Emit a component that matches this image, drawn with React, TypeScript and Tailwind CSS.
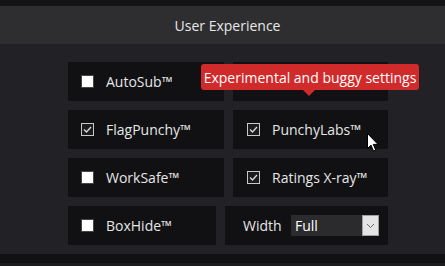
import React from "react";

function Check({ checked }: { checked: boolean }) {
  if (checked) {
    return (
      <span className="w-[13px] h-[13px] border border-[#c8c8c8] bg-[#1c1c1e] flex items-center justify-center shrink-0">
        <svg width="11" height="11" viewBox="0 0 11 11">
          <path d="M2 5.5 L4.5 8 L9 3" stroke="#d8d8d8" strokeWidth="1.4" fill="none" />
        </svg>
      </span>
    );
  }
  return <span className="w-[13px] h-[13px] border border-[#444] bg-white shrink-0" />;
}

function Opt({ label, checked, w, pl }: { label: string; checked: boolean; w: string; pl: string }) {
  return (
    <div className={`${w} h-[39px] bg-[#111113] flex items-center ${pl} gap-[12px] text-[14px] text-[#e6e6e6]`}>
      <Check checked={checked} />
      <span>{label}</span>
    </div>
  );
}

export default function App() {
  return (
    <div className="w-[445px] h-[266px] bg-[#222226] flex flex-col relative overflow-hidden" style={{ fontFamily: '"Open Sans", sans-serif' }}>
      <div className="h-[6px] bg-[#131315]" />
      <div className="h-[38px] bg-[#2e2e31] flex items-center justify-center text-[14px] text-[#e8e8e8] pl-[10px]">
        User Experience
      </div>
      <div className="flex-1 flex flex-col gap-[9px] pt-[18px] pl-[68px]">
        <div className="flex gap-[9px]">
          <Opt label="AutoSub™" checked={false} w="w-[156px]" pl="pl-[13px]" />
          <Opt label="" checked={false} w="w-[155px]" pl="pl-[14px]" />
        </div>
        <div className="flex gap-[9px]">
          <Opt label="FlagPunchy™" checked={true} w="w-[156px]" pl="pl-[13px]" />
          <Opt label="PunchyLabs™" checked={true} w="w-[155px]" pl="pl-[14px]" />
        </div>
        <div className="flex gap-[9px]">
          <Opt label="WorkSafe™" checked={false} w="w-[156px]" pl="pl-[13px]" />
          <Opt label="Ratings X-ray™" checked={true} w="w-[155px]" pl="pl-[14px]" />
        </div>
        <div className="flex gap-[9px]">
          <Opt label="BoxHide™" checked={false} w="w-[148px]" pl="pl-[13px]" />
          <div className="w-[163px] h-[39px] bg-[#111113] flex items-center pl-[18px] text-[14px] text-[#e6e6e6]">
            <span className="w-[48px]">Width</span>
            <div className="w-[88px] h-[21px] bg-[#2b2b2e] flex items-center">
              <span className="flex-1 pl-[4px] text-white text-[14px]">Full</span>
              <span className="w-[17px] h-[21px] bg-[#e4e4e4] border border-[#a0a0a0] flex items-center justify-center">
                <svg width="9" height="6" viewBox="0 0 9 6">
                  <path d="M1 1 L4.5 4.5 L8 1" stroke="#666" strokeWidth="1" fill="none" />
                </svg>
              </span>
            </div>
          </div>
        </div>
      </div>
      <div className="h-[9px] bg-[#111113] mt-[9px]" />
      <div className="h-[3px] bg-[#1c1c1e]" />

      <div className="absolute left-[201px] top-[64px] w-[218px] h-[26px] bg-[#d12a2b] rounded-[3px] flex items-center justify-center text-[14px] text-white">
        Experimental and buggy settings
        <span className="absolute left-[102px] top-[26px] w-0 h-0 border-l-[6px] border-r-[6px] border-t-[6px] border-l-transparent border-r-transparent border-t-[#d12a2b]" />
      </div>

      <svg className="absolute left-[367px] top-[133px]" width="13" height="20" viewBox="0 0 13 20">
        <path d="M0.5 0.5 L0.5 15.5 L4 12.2 L6.5 18 L8.7 17 L6.3 11.4 L11 11.4 Z" fill="#fff" stroke="#000" strokeWidth="1" />
      </svg>
    </div>
  );
}
